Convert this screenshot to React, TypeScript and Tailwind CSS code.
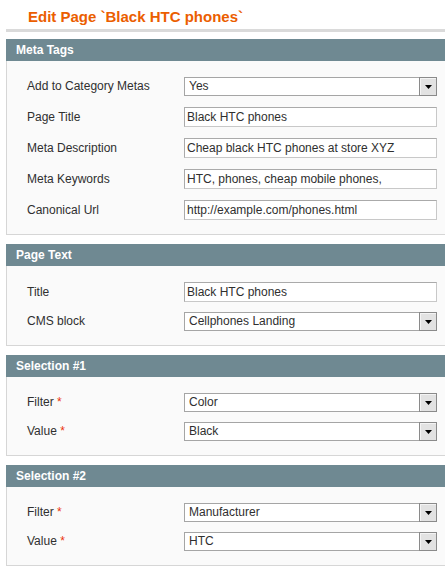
const font = { fontFamily: '"Liberation Sans", Arial, sans-serif' };

type Row = { label: string; value: string; kind: 'input' | 'select'; required?: boolean };

const panels: { title: string; gap: string; rows: Row[] }[] = [
  {
    title: 'Meta Tags',
    gap: 'gap-[11px]',
    rows: [
      { label: 'Add to Category Metas', value: 'Yes', kind: 'select' },
      { label: 'Page Title', value: 'Black HTC phones', kind: 'input' },
      { label: 'Meta Description', value: 'Cheap black HTC phones at store XYZ', kind: 'input' },
      { label: 'Meta Keywords', value: 'HTC, phones, cheap mobile phones,', kind: 'input' },
      { label: 'Canonical Url', value: 'http://example.com/phones.html', kind: 'input' },
    ],
  },
  {
    title: 'Page Text',
    gap: 'gap-[10px]',
    rows: [
      { label: 'Title', value: 'Black HTC phones', kind: 'input' },
      { label: 'CMS block', value: 'Cellphones Landing', kind: 'select' },
    ],
  },
  {
    title: 'Selection #1',
    gap: 'gap-[10px]',
    rows: [
      { label: 'Filter', value: 'Color', kind: 'select', required: true },
      { label: 'Value', value: 'Black', kind: 'select', required: true },
    ],
  },
  {
    title: 'Selection #2',
    gap: 'gap-[10px]',
    rows: [
      { label: 'Filter', value: 'Manufacturer', kind: 'select', required: true },
      { label: 'Value', value: 'HTC', kind: 'select', required: true },
    ],
  },
];

function Field({ row }: { row: Row }) {
  if (row.kind === 'input') {
    return (
      <div className="h-[20px] w-[253px] border border-[#c8c8c8] border-l-[#aaaaaa] border-t-[#aaaaaa] bg-white pl-[2px] text-[12px] leading-[18px] text-[#2f2f2f]">
        {row.value}
      </div>
    );
  }
  return (
    <div className="flex h-[19px] w-[253px] border border-[#a5a5a5] bg-white text-[12px] leading-[17px] text-[#2f2f2f]">
      <span className="flex-1 pl-[4px]">{row.value}</span>
      <span className="-my-px -mr-px flex h-[19px] w-[18px] items-center justify-center border border-[#8a8a8a] bg-[#e2e2e2] shadow-[inset_1px_1px_0_#f4f4f4]">
        <svg width="7" height="4" viewBox="0 0 7 4">
          <path d="M0 0h7L3.5 4z" fill="#000" />
        </svg>
      </span>
    </div>
  );
}

function Panel({ title, gap, rows }: { title: string; gap: string; rows: Row[] }) {
  return (
    <section className="mb-[9px] w-[450px]">
      <div className="h-[22px] bg-[#6f8992] px-[10px] text-[12px] font-bold leading-[22px] text-white">{title}</div>
      <div className={`flex flex-col ${gap} border border-t-0 border-[#d6d6d6] bg-[#fafafa] pb-[14px] pl-[20px] pt-[16px]`}>
        {rows.map((row) => (
          <div key={row.label + row.value} className="flex items-center">
            <label className="-mt-px w-[157px] text-[12px] leading-[18px] text-[#2f2f2f]">
              {row.label}
              {row.required && <span className="text-[#eb340a]"> *</span>}
            </label>
            <Field row={row} />
          </div>
        ))}
      </div>
    </section>
  );
}

export default function App() {
  return (
    <div className="h-[578px] w-[445px] overflow-hidden bg-white pl-[6px]" style={font}>
      <div className="mb-[7px] w-[450px] border-b-[3px] border-[#dadada] pb-[3px] pl-[22px] pt-[8px]">
        <h3 className="text-[15px] font-bold leading-[18px] text-[#eb5e00]">Edit Page `Black HTC phones`</h3>
      </div>
      {panels.map((p) => (
        <Panel key={p.title} {...p} />
      ))}
    </div>
  );
}
